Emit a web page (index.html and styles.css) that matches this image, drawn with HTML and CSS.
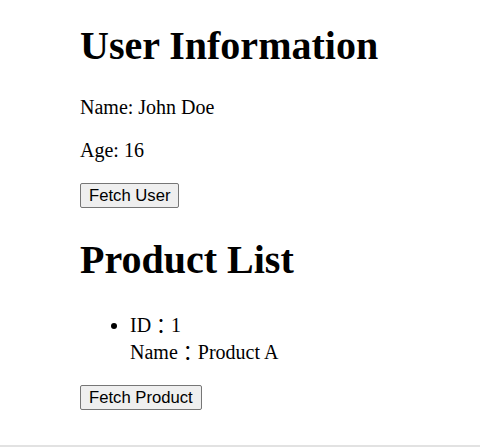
FILE: index.html
```html
<!DOCTYPE html>
<html>
<head>
<meta charset="utf-8">
<link rel="stylesheet" href="styles.css">
</head>
<body>
<div class="page">
  <section class="user">
    <h1 class="title first">User Information</h1>
    <p class="line">Name: John Doe</p>
    <p class="line">Age: 16</p>
    <div class="actions"><button class="btn">Fetch User</button></div>
  </section>
  <section class="products">
    <h1 class="title second">Product List</h1>
    <ul class="list">
      <li>ID<span class="colon">：</span>1<br>Name<span class="colon">：</span>Product A</li>
    </ul>
    <div class="actions"><button class="btn">Fetch Product</button></div>
  </section>
</div>
</body>
</html>
```
FILE: styles.css
```css
html, body {
  margin: 0;
  padding: 0;
}
body {
  font-family: "Liberation Serif", "Noto Sans CJK JP", serif;
  font-size: 20px;
  color: #000;
  background: #fff;
}
.page {
  box-sizing: border-box;
  height: 447px;
  padding: 0 10px 0 80px;
  border-bottom: 2px solid #e2e2e2;
  overflow: hidden;
}
.title {
  font-size: 40px;
  font-weight: bold;
  line-height: 46px;
  margin: 0;
}
.title.first {
  padding-top: 23px;
  margin-bottom: 27px;
}
.title.second {
  margin-top: 29px;
  margin-bottom: 29px;
}
.line {
  line-height: 23px;
  margin: 0 0 20px;
}
.actions {
  display: flex;
  padding-top: 1px;
}
.list {
  margin: 0 0 18px;
  padding-left: 50px;
}
.list li {
  line-height: 27px;
}
.colon {
  font-family: "Noto Sans CJK JP", sans-serif;
  vertical-align: -2px;
  line-height: 1;
}
.btn {
  font-family: "Liberation Sans", Arial, sans-serif;
  font-size: 16.67px;
  line-height: 19px;
  padding: 1px 8px;
  border: 1px solid #767676;
  border-radius: 2px;
  background: #efefef;
  color: #000;
  height: 25px;
  box-sizing: border-box;
}
```
